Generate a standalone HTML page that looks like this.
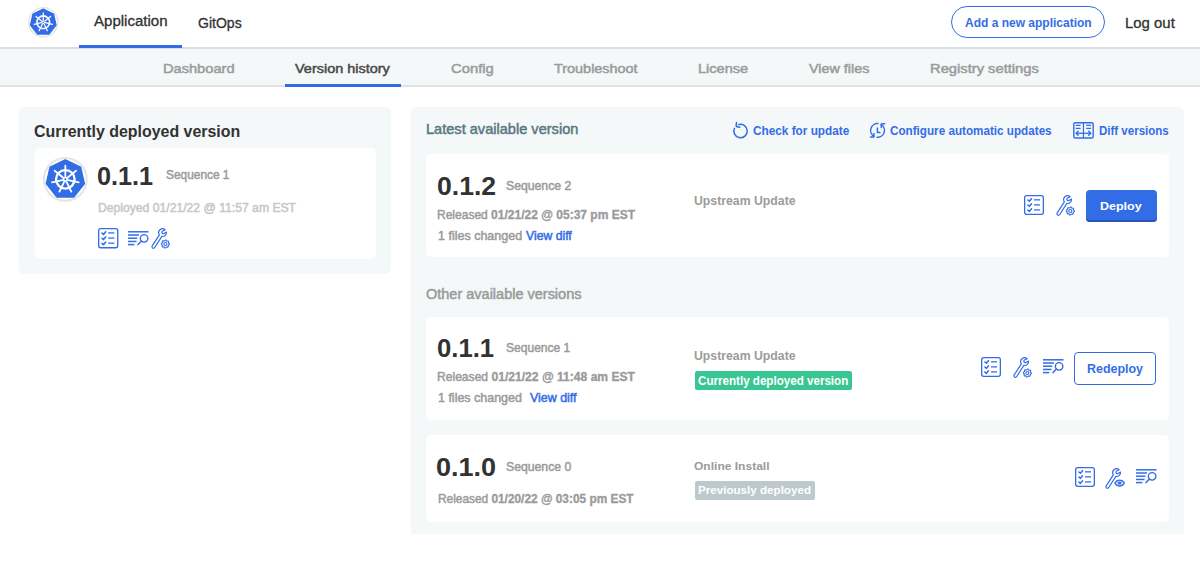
<!DOCTYPE html>
<html><head><meta charset="utf-8"><style>
html,body{margin:0;padding:0;background:#fff;width:1200px;height:564px;overflow:hidden;position:relative}
body{font-family:"Liberation Sans",sans-serif}
.t{position:absolute;line-height:1;white-space:nowrap}
.t b{font-weight:700}
svg{position:absolute;overflow:visible}
</style></head><body>
<div style="position:absolute;left:0px;top:47px;width:1200px;height:2px;background:#dadee0"></div>
<div style="position:absolute;left:0px;top:49px;width:1200px;height:36px;background:#f5f8f9"></div>
<div style="position:absolute;left:0px;top:85px;width:1200px;height:2px;background:#e0e2e3"></div>
<div style="position:absolute;left:79px;top:45px;width:103px;height:3px;background:#326de6"></div>
<div style="position:absolute;left:285px;top:84px;width:116px;height:3px;background:#326de6"></div>
<div class="t" id="app" style="left:93.90px;top:14.49px;font-size:14px;color:#323232;-webkit-text-stroke:0.3px #323232;transform:scaleX(1.0731);transform-origin:0 0;">Application</div>
<div class="t" id="gitops" style="left:197.80px;top:15.69px;font-size:14px;color:#323232;-webkit-text-stroke:0.3px #323232;transform:scaleX(1.0022);transform-origin:0 0;">GitOps</div>
<div style="position:absolute;left:951.2px;top:6.2px;width:153.6px;height:32px;border:1.2px solid #326de6;border-radius:16px;box-sizing:border-box"></div>
<div class="t" id="addapp" style="left:965.00px;top:17.17px;font-size:12.2px;color:#326de6;font-weight:700;transform:scaleX(0.9844);transform-origin:0 0;">Add a new application</div>
<div class="t" id="logout" style="left:1125.00px;top:15.65px;font-size:14px;color:#323232;-webkit-text-stroke:0.3px #323232;transform:scaleX(1.0663);transform-origin:0 0;">Log out</div>
<div class="t" id="sub0" style="left:163.10px;top:61.66px;font-size:13.4px;color:#9b9b9b;-webkit-text-stroke:0.5px #9b9b9b;transform:scaleX(1.0916);transform-origin:0 0;">Dashboard</div>
<div class="t" id="sub1" style="left:295.00px;top:61.66px;font-size:13.4px;color:#4a4a4a;-webkit-text-stroke:0.5px #4a4a4a;transform:scaleX(1.0796);transform-origin:0 0;">Version history</div>
<div class="t" id="sub2" style="left:451.20px;top:61.66px;font-size:13.4px;color:#9b9b9b;-webkit-text-stroke:0.5px #9b9b9b;transform:scaleX(1.1059);transform-origin:0 0;">Config</div>
<div class="t" id="sub3" style="left:554.20px;top:61.66px;font-size:13.4px;color:#9b9b9b;-webkit-text-stroke:0.5px #9b9b9b;transform:scaleX(1.0767);transform-origin:0 0;">Troubleshoot</div>
<div class="t" id="sub4" style="left:698.30px;top:61.66px;font-size:13.4px;color:#9b9b9b;-webkit-text-stroke:0.5px #9b9b9b;transform:scaleX(1.0870);transform-origin:0 0;">License</div>
<div class="t" id="sub5" style="left:809.10px;top:61.66px;font-size:13.4px;color:#9b9b9b;-webkit-text-stroke:0.5px #9b9b9b;transform:scaleX(1.0708);transform-origin:0 0;">View files</div>
<div class="t" id="sub6" style="left:929.80px;top:61.66px;font-size:13.4px;color:#9b9b9b;-webkit-text-stroke:0.5px #9b9b9b;transform:scaleX(1.0995);transform-origin:0 0;">Registry settings</div>
<div style="position:absolute;left:19px;top:107px;width:372px;height:167px;background:#f5f8f9;border-radius:5px"></div>
<div class="t" id="cdv" style="left:33.80px;top:123.68px;font-size:16.8px;color:#323232;font-weight:700;transform:scaleX(0.9492);transform-origin:0 0;">Currently deployed version</div>
<div style="position:absolute;left:34.5px;top:148px;width:341.5px;height:111px;background:#fff;border-radius:5px"></div>
<div class="t" id="l_num" style="left:96.70px;top:163.61px;font-size:25.6px;color:#323232;font-weight:700;transform:scaleX(0.9854);transform-origin:0 0;">0.1.1</div>
<div class="t" id="l_seq" style="left:166.00px;top:169.48px;font-size:12.8px;color:#9b9b9b;-webkit-text-stroke:0.5px #9b9b9b;transform:scaleX(0.9294);transform-origin:0 0;">Sequence 1</div>
<div class="t" id="l_dep" style="left:97.70px;top:201.94px;font-size:12.8px;color:#c4c8ca;-webkit-text-stroke:0.5px #c4c8ca;transform:scaleX(0.9504);transform-origin:0 0;">Deployed 01/21/22 @ 11:57 am EST</div>
<div style="position:absolute;left:411px;top:107px;width:773px;height:427px;background:#f5f8f9;border-radius:5px 5px 0 0"></div>
<div class="t" id="lav" style="left:425.70px;top:122.40px;font-size:14.3px;color:#577981;-webkit-text-stroke:0.5px #577981;transform:scaleX(1.0196);transform-origin:0 0;">Latest available version</div>
<div class="t" id="cfu" style="left:752.80px;top:125.18px;font-size:12.5px;color:#326de6;font-weight:700;transform:scaleX(0.9431);transform-origin:0 0;">Check for update</div>
<div class="t" id="cau" style="left:890.00px;top:125.18px;font-size:12.5px;color:#326de6;font-weight:700;transform:scaleX(0.9346);transform-origin:0 0;">Configure automatic updates</div>
<div class="t" id="dv" style="left:1099.00px;top:125.18px;font-size:12.5px;color:#326de6;font-weight:700;transform:scaleX(0.9202);transform-origin:0 0;">Diff versions</div>
<div style="position:absolute;left:425.5px;top:154px;width:743.5px;height:103px;background:#fff;border-radius:5px"></div>
<div class="t" id="c1_num" style="left:437.20px;top:173.61px;font-size:25.6px;color:#323232;font-weight:700;transform:scaleX(1.0384);transform-origin:0 0;">0.1.2</div>
<div class="t" id="c1_seq" style="left:506.30px;top:180.40px;font-size:12.8px;color:#9b9b9b;-webkit-text-stroke:0.5px #9b9b9b;transform:scaleX(0.9557);transform-origin:0 0;">Sequence 2</div>
<div class="t" id="c1_rel" style="left:437.20px;top:208.70px;font-size:12.4px;color:#9b9b9b;-webkit-text-stroke:0.5px #9b9b9b;transform:scaleX(0.9698);transform-origin:0 0;">Released <span style="font-weight:700;-webkit-text-stroke-width:0.35px">01/21/22 @ 05:37 pm EST</span></div>
<div class="t" id="c1_fc" style="left:438.20px;top:229.70px;font-size:12.4px;color:#9b9b9b;-webkit-text-stroke:0.5px #9b9b9b;transform:scaleX(1.0092);transform-origin:0 0;">1 files changed</div>
<div class="t" id="c1_vd" style="left:526.00px;top:229.70px;font-size:12.4px;color:#326de6;-webkit-text-stroke:0.5px #326de6;transform:scaleX(0.9851);transform-origin:0 0;">View diff</div>
<div class="t" id="c1_up" style="left:693.70px;top:196.21px;font-size:11.9px;color:#9b9b9b;font-weight:700;transform:scaleX(1.0317);transform-origin:0 0;">Upstream Update</div>
<div style="position:absolute;left:1086px;top:190px;width:71px;height:32px;background:#326de6;border-radius:4px;box-shadow:inset 0 -2px 0 #2756b8"></div>
<div class="t" id="deploy" style="left:1100.00px;top:200.18px;font-size:11.6px;color:#fff;font-weight:700;transform:scaleX(1.0776);transform-origin:0 0;">Deploy</div>
<div class="t" id="oav" style="left:426.20px;top:287.49px;font-size:14px;color:#9b9b9b;-webkit-text-stroke:0.5px #9b9b9b;transform:scaleX(1.0351);transform-origin:0 0;">Other available versions</div>
<div style="position:absolute;left:425.5px;top:317px;width:743.5px;height:103px;background:#fff;border-radius:5px"></div>
<div class="t" id="c2_num" style="left:436.90px;top:336.07px;font-size:25.6px;color:#323232;font-weight:700;transform:scaleX(1.0037);transform-origin:0 0;">0.1.1</div>
<div class="t" id="c2_seq" style="left:506.00px;top:342.36px;font-size:12.8px;color:#9b9b9b;-webkit-text-stroke:0.5px #9b9b9b;transform:scaleX(0.9412);transform-origin:0 0;">Sequence 1</div>
<div class="t" id="c2_rel" style="left:437.20px;top:370.70px;font-size:12.4px;color:#9b9b9b;-webkit-text-stroke:0.5px #9b9b9b;transform:scaleX(0.9759);transform-origin:0 0;">Released <span style="font-weight:700;-webkit-text-stroke-width:0.35px">01/21/22 @ 11:48 am EST</span></div>
<div class="t" id="c2_fc" style="left:438.20px;top:391.50px;font-size:12.4px;color:#9b9b9b;-webkit-text-stroke:0.5px #9b9b9b;transform:scaleX(1.0066);transform-origin:0 0;">1 files changed</div>
<div class="t" id="c2_vd" style="left:530.40px;top:391.50px;font-size:12.4px;color:#326de6;-webkit-text-stroke:0.5px #326de6;transform:scaleX(1.0030);transform-origin:0 0;">View diff</div>
<div class="t" id="c2_up" style="left:693.70px;top:350.71px;font-size:11.9px;color:#9b9b9b;font-weight:700;transform:scaleX(1.0317);transform-origin:0 0;">Upstream Update</div>
<div style="position:absolute;left:694.5px;top:371px;width:157px;height:19px;background:#38c793;border-radius:2px"></div>
<div class="t" id="badge1" style="left:697.60px;top:375.55px;font-size:11.9px;color:#fff;font-weight:700;transform:scaleX(0.9761);transform-origin:0 0;">Currently deployed version</div>
<div style="position:absolute;left:1074.2px;top:352px;width:82.3px;height:32.5px;border:1.2px solid #326de6;border-radius:4px;box-sizing:border-box"></div>
<div class="t" id="redeploy" style="left:1087.00px;top:363.25px;font-size:12.2px;color:#326de6;font-weight:700;transform:scaleX(1.0206);transform-origin:0 0;">Redeploy</div>
<div style="position:absolute;left:425.5px;top:435px;width:743.5px;height:86.5px;background:#fff;border-radius:5px"></div>
<div class="t" id="c3_num" style="left:436.20px;top:455.03px;font-size:25.6px;color:#323232;font-weight:700;transform:scaleX(1.0554);transform-origin:0 0;">0.1.0</div>
<div class="t" id="c3_seq" style="left:506.00px;top:460.86px;font-size:12.8px;color:#9b9b9b;-webkit-text-stroke:0.5px #9b9b9b;transform:scaleX(0.9559);transform-origin:0 0;">Sequence 0</div>
<div class="t" id="c3_rel" style="left:438.20px;top:492.58px;font-size:12.4px;color:#9b9b9b;-webkit-text-stroke:0.5px #9b9b9b;transform:scaleX(0.9574);transform-origin:0 0;">Released <span style="font-weight:700;-webkit-text-stroke-width:0.35px">01/20/22 @ 03:05 pm EST</span></div>
<div class="t" id="c3_up" style="left:694.40px;top:459.68px;font-size:11.7px;color:#9b9b9b;font-weight:700;transform:scaleX(1.0290);transform-origin:0 0;">Online Install</div>
<div style="position:absolute;left:694.5px;top:481px;width:120.3px;height:19px;background:#bdc9cc;border-radius:2px"></div>
<div class="t" id="badge2" style="left:698.10px;top:485.27px;font-size:11.5px;color:#fff;font-weight:700;transform:scaleX(1.0102);transform-origin:0 0;">Previously deployed</div>
<svg style="left:28.25px;top:7.05px" width="30.50" height="30.50" viewBox="-22.35 -22.35 44.7 44.7" fill="none"><circle cx="0" cy="0" r="21.4" fill="#fff" stroke="#e4e4e4" stroke-width="2"/><path d="M0.00 -19.10 L14.93 -11.91 L18.62 4.25 L8.29 17.21 L-8.29 17.21 L-18.62 4.25 L-14.93 -11.91 Z" fill="#326de6" stroke="#326de6" stroke-width="2.2" stroke-linejoin="round"/><g stroke="#fff" stroke-width="1.8" stroke-linecap="round"><path d="M0.00 -3.00 L0.00 -13.70"/><path d="M2.35 -1.87 L10.71 -8.54"/><path d="M2.92 0.67 L13.36 3.05"/><path d="M1.30 2.70 L5.94 12.34"/><path d="M-1.30 2.70 L-5.94 12.34"/><path d="M-2.92 0.67 L-13.36 3.05"/><path d="M-2.35 -1.87 L-10.71 -8.54"/></g><circle cx="0" cy="0" r="9.3" stroke="#fff" stroke-width="2.3"/><circle cx="0" cy="0" r="2.6" fill="#fff" stroke="none"/><circle cx="0" cy="0" r="1.0" fill="#326de6" stroke="none"/></svg>
<svg style="left:42.65px;top:156.65px" width="44.70" height="44.70" viewBox="-22.35 -22.35 44.7 44.7" fill="none"><circle cx="0" cy="0" r="21.4" fill="#fff" stroke="#e4e4e4" stroke-width="2"/><path d="M0.00 -19.10 L14.93 -11.91 L18.62 4.25 L8.29 17.21 L-8.29 17.21 L-18.62 4.25 L-14.93 -11.91 Z" fill="#326de6" stroke="#326de6" stroke-width="2.2" stroke-linejoin="round"/><g stroke="#fff" stroke-width="1.8" stroke-linecap="round"><path d="M0.00 -3.00 L0.00 -13.70"/><path d="M2.35 -1.87 L10.71 -8.54"/><path d="M2.92 0.67 L13.36 3.05"/><path d="M1.30 2.70 L5.94 12.34"/><path d="M-1.30 2.70 L-5.94 12.34"/><path d="M-2.92 0.67 L-13.36 3.05"/><path d="M-2.35 -1.87 L-10.71 -8.54"/></g><circle cx="0" cy="0" r="9.3" stroke="#fff" stroke-width="2.3"/><circle cx="0" cy="0" r="2.6" fill="#fff" stroke="none"/><circle cx="0" cy="0" r="1.0" fill="#326de6" stroke="none"/></svg>
<svg style="left:97.6px;top:228.4px" width="20.4" height="20.4" viewBox="0 0 20 20" preserveAspectRatio="none" fill="none" stroke="#326de6"><rect x="0.65" y="0.65" width="18.7" height="18.7" rx="2" stroke-width="1.3"/><g stroke-width="1.5" stroke-linecap="round" stroke-linejoin="round"><path d="M3.9 5.00 L5.4 6.30 L7.5 3.70"/><path d="M3.9 10.05 L5.4 11.35 L7.5 8.75"/><path d="M3.9 15.10 L5.4 16.40 L7.5 13.80"/></g><g stroke-width="1.5" opacity="0.85"><path d="M10 4.80 H16"/><path d="M10 9.85 H16"/><path d="M10 14.90 H16"/></g></svg>
<svg style="left:127.5px;top:231px" width="22" height="16" viewBox="0 0 22 16" fill="none" stroke="#326de6"><g stroke-width="1.5"><path d="M0 0.8 H20.5"/><path d="M0 4.0 H11.0"/><path d="M0 7.2 H9.3"/><path d="M0 10.45 H8.5"/><path d="M0 13.6 H6.4"/></g><circle cx="16.1" cy="7.35" r="3.75" stroke-width="1.4"/><path d="M13.3 10.2 L10.0 13.6" stroke-width="1.5" stroke-linecap="round"/></svg>
<svg style="left:147px;top:223px" width="28" height="30" viewBox="0 0 28 30" fill="none" stroke="#326de6"><path transform="translate(15.6 9.6) rotate(33)" d="M-1.5 16.8 L-1.5 3.600 A3.9 3.9 0 0 1 0.526 -3.864 L-0.863 -1.252 A1.35 1.35 0 0 0 1.521 0.016 L2.910 -2.597 A3.9 3.9 0 0 1 1.5 3.600 L1.5 16.8 A1.5 1.5 0 0 1 -1.5 16.8 Z" stroke-width="1.2" stroke-linejoin="round"/><path d="M18.35 17.00 L19.13 17.08 L19.61 17.95 L20.18 18.26 L21.18 18.17 L21.68 18.78 L21.40 19.74 L21.59 20.36 L22.35 21.00 L22.27 21.78 L21.40 22.26 L21.09 22.83 L21.18 23.83 L20.57 24.33 L19.61 24.05 L18.99 24.24 L18.35 25.00 L17.57 24.92 L17.09 24.05 L16.52 23.74 L15.52 23.83 L15.02 23.22 L15.30 22.26 L15.11 21.64 L14.35 21.00 L14.43 20.22 L15.30 19.74 L15.61 19.17 L15.52 18.17 L16.13 17.67 L17.09 17.95 L17.71 17.76 Z" stroke-width="1.1" stroke-linejoin="round"/><circle cx="18.35" cy="21.0" r="1.5" stroke-width="1.1"/></svg>
<svg style="left:728px;top:118px" width="30" height="24" viewBox="0 0 30 24" fill="none" stroke="#326de6"><path d="M6.63 9.85 A6.7 6.7 0 1 0 10.26 6.70" stroke-width="1.5"/><path d="M8.5 4.4 L8.2 8.4 L11.8 9.2" stroke-width="1.5" stroke-linecap="round" stroke-linejoin="round"/></svg>
<svg style="left:865px;top:118px" width="30" height="24" viewBox="0 0 30 24" fill="none" stroke="#326de6"><path d="M13.51 5.57 A6.9 6.9 0 0 0 9.31 18.49" stroke-width="1.45"/><path d="M11.59 19.23 A6.9 6.9 0 0 0 15.79 6.31" stroke-width="1.45"/><path d="M5.5 18.9 L8.9 18.9 L8.9 15.4" stroke-width="1.5" stroke-linecap="round" stroke-linejoin="round"/><path d="M19.6 5.7 L16.2 5.9 L16.4 9.6" stroke-width="1.5" stroke-linecap="round" stroke-linejoin="round"/><path d="M12.4 10.1 V14.4 H14.9" stroke-width="1.5" stroke-linecap="round" stroke-linejoin="round"/></svg>
<svg style="left:1068px;top:116px" width="30" height="26" viewBox="0 0 30 26" fill="none" stroke="#326de6"><rect x="5.8" y="6.7" width="19.4" height="15.3" rx="1.6" stroke-width="1.4"/><path d="M15.45 6.7 V22" stroke-width="1.2"/><g stroke-width="1.3"><path d="M7.7 9.4 H12.6 M7.7 12.35 H12.6 M18.2 9.4 H23.1 M18.2 12.35 H23.1"/></g><path d="M8 17.3 H22.8" stroke-width="1.3"/><path d="M10.1 15.3 L8 17.3 L10.1 19.3 M20.7 15.3 L22.8 17.3 L20.7 19.3" stroke-width="1.4" stroke-linecap="round" stroke-linejoin="round"/></svg>
<svg style="left:1024.15px;top:194.8px" width="20" height="20" viewBox="0 0 20 20" preserveAspectRatio="none" fill="none" stroke="#326de6"><rect x="0.65" y="0.65" width="18.7" height="18.7" rx="2" stroke-width="1.3"/><g stroke-width="1.5" stroke-linecap="round" stroke-linejoin="round"><path d="M3.9 5.00 L5.4 6.30 L7.5 3.70"/><path d="M3.9 10.05 L5.4 11.35 L7.5 8.75"/><path d="M3.9 15.10 L5.4 16.40 L7.5 13.80"/></g><g stroke-width="1.5" opacity="0.85"><path d="M10 4.80 H16"/><path d="M10 9.85 H16"/><path d="M10 14.90 H16"/></g></svg>
<svg style="left:1052px;top:190px" width="28" height="30" viewBox="0 0 28 30" fill="none" stroke="#326de6"><path transform="translate(15.6 9.6) rotate(33)" d="M-1.5 16.8 L-1.5 3.600 A3.9 3.9 0 0 1 0.526 -3.864 L-0.863 -1.252 A1.35 1.35 0 0 0 1.521 0.016 L2.910 -2.597 A3.9 3.9 0 0 1 1.5 3.600 L1.5 16.8 A1.5 1.5 0 0 1 -1.5 16.8 Z" stroke-width="1.2" stroke-linejoin="round"/><path d="M18.35 17.00 L19.13 17.08 L19.61 17.95 L20.18 18.26 L21.18 18.17 L21.68 18.78 L21.40 19.74 L21.59 20.36 L22.35 21.00 L22.27 21.78 L21.40 22.26 L21.09 22.83 L21.18 23.83 L20.57 24.33 L19.61 24.05 L18.99 24.24 L18.35 25.00 L17.57 24.92 L17.09 24.05 L16.52 23.74 L15.52 23.83 L15.02 23.22 L15.30 22.26 L15.11 21.64 L14.35 21.00 L14.43 20.22 L15.30 19.74 L15.61 19.17 L15.52 18.17 L16.13 17.67 L17.09 17.95 L17.71 17.76 Z" stroke-width="1.1" stroke-linejoin="round"/><circle cx="18.35" cy="21.0" r="1.5" stroke-width="1.1"/></svg>
<svg style="left:980.8px;top:356.7px" width="20" height="20" viewBox="0 0 20 20" preserveAspectRatio="none" fill="none" stroke="#326de6"><rect x="0.65" y="0.65" width="18.7" height="18.7" rx="2" stroke-width="1.3"/><g stroke-width="1.5" stroke-linecap="round" stroke-linejoin="round"><path d="M3.9 5.00 L5.4 6.30 L7.5 3.70"/><path d="M3.9 10.05 L5.4 11.35 L7.5 8.75"/><path d="M3.9 15.10 L5.4 16.40 L7.5 13.80"/></g><g stroke-width="1.5" opacity="0.85"><path d="M10 4.80 H16"/><path d="M10 9.85 H16"/><path d="M10 14.90 H16"/></g></svg>
<svg style="left:1009px;top:352.2px" width="28" height="30" viewBox="0 0 28 30" fill="none" stroke="#326de6"><path transform="translate(15.6 9.6) rotate(33)" d="M-1.5 16.8 L-1.5 3.600 A3.9 3.9 0 0 1 0.526 -3.864 L-0.863 -1.252 A1.35 1.35 0 0 0 1.521 0.016 L2.910 -2.597 A3.9 3.9 0 0 1 1.5 3.600 L1.5 16.8 A1.5 1.5 0 0 1 -1.5 16.8 Z" stroke-width="1.2" stroke-linejoin="round"/><path d="M18.35 17.00 L19.13 17.08 L19.61 17.95 L20.18 18.26 L21.18 18.17 L21.68 18.78 L21.40 19.74 L21.59 20.36 L22.35 21.00 L22.27 21.78 L21.40 22.26 L21.09 22.83 L21.18 23.83 L20.57 24.33 L19.61 24.05 L18.99 24.24 L18.35 25.00 L17.57 24.92 L17.09 24.05 L16.52 23.74 L15.52 23.83 L15.02 23.22 L15.30 22.26 L15.11 21.64 L14.35 21.00 L14.43 20.22 L15.30 19.74 L15.61 19.17 L15.52 18.17 L16.13 17.67 L17.09 17.95 L17.71 17.76 Z" stroke-width="1.1" stroke-linejoin="round"/><circle cx="18.35" cy="21.0" r="1.5" stroke-width="1.1"/></svg>
<svg style="left:1043.2px;top:359.3px" width="22" height="16" viewBox="0 0 22 16" fill="none" stroke="#326de6"><g stroke-width="1.5"><path d="M0 0.8 H20.5"/><path d="M0 4.0 H11.0"/><path d="M0 7.2 H9.3"/><path d="M0 10.45 H8.5"/><path d="M0 13.6 H6.4"/></g><circle cx="16.1" cy="7.35" r="3.75" stroke-width="1.4"/><path d="M13.3 10.2 L10.0 13.6" stroke-width="1.5" stroke-linecap="round"/></svg>
<svg style="left:1075.25px;top:467.1px" width="20" height="20" viewBox="0 0 20 20" preserveAspectRatio="none" fill="none" stroke="#326de6"><rect x="0.65" y="0.65" width="18.7" height="18.7" rx="2" stroke-width="1.3"/><g stroke-width="1.5" stroke-linecap="round" stroke-linejoin="round"><path d="M3.9 5.00 L5.4 6.30 L7.5 3.70"/><path d="M3.9 10.05 L5.4 11.35 L7.5 8.75"/><path d="M3.9 15.10 L5.4 16.40 L7.5 13.80"/></g><g stroke-width="1.5" opacity="0.85"><path d="M10 4.80 H16"/><path d="M10 9.85 H16"/><path d="M10 14.90 H16"/></g></svg>
<svg style="left:1101.3px;top:463.4px" width="28" height="30" viewBox="0 0 28 30" fill="none" stroke="#326de6"><path transform="translate(15.6 9.6) rotate(33)" d="M-1.5 16.8 L-1.5 3.600 A3.9 3.9 0 0 1 0.526 -3.864 L-0.863 -1.252 A1.35 1.35 0 0 0 1.521 0.016 L2.910 -2.597 A3.9 3.9 0 0 1 1.5 3.600 L1.5 16.8 A1.5 1.5 0 0 1 -1.5 16.8 Z" stroke-width="1.2" stroke-linejoin="round"/><path d="M13.900000000000002 20.1 C16.25 16.16 20.95 16.16 23.3 20.1 C20.95 24.04 16.25 24.04 13.900000000000002 20.1 Z" stroke-width="1.3" stroke-linejoin="round" fill="#fff"/><circle cx="18.6" cy="20.1" r="1.6" fill="#326de6" stroke="none"/><circle cx="18.6" cy="20.1" r="2.3" stroke-width="0.7" opacity="0.6"/></svg>
<svg style="left:1135.85px;top:469.2px" width="22" height="16" viewBox="0 0 22 16" fill="none" stroke="#326de6"><g stroke-width="1.5"><path d="M0 0.8 H20.5"/><path d="M0 4.0 H11.0"/><path d="M0 7.2 H9.3"/><path d="M0 10.45 H8.5"/><path d="M0 13.6 H6.4"/></g><circle cx="16.1" cy="7.35" r="3.75" stroke-width="1.4"/><path d="M13.3 10.2 L10.0 13.6" stroke-width="1.5" stroke-linecap="round"/></svg>

</body></html>
